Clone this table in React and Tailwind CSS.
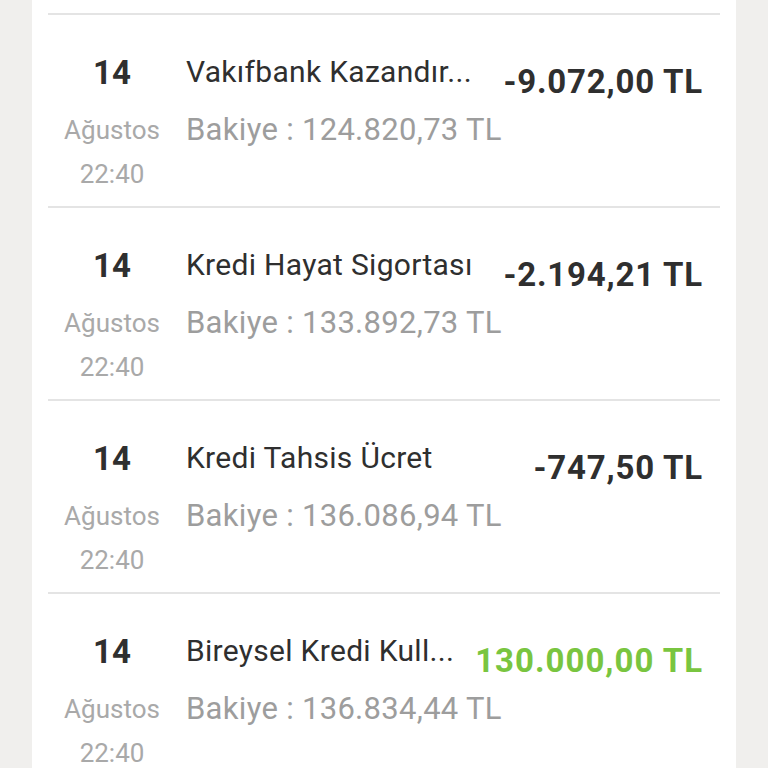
const rows = [
  { title: "Vakıfbank Kazandır...", balance: "124.820,73 TL", amount: "-9.072,00 TL", positive: false },
  { title: "Kredi Hayat Sigortası", balance: "133.892,73 TL", amount: "-2.194,21 TL", positive: false },
  { title: "Kredi Tahsis Ücret", balance: "136.086,94 TL", amount: "-747,50 TL", positive: false },
  { title: "Bireysel Kredi Kull...", balance: "136.834,44 TL", amount: "130.000,00 TL", positive: true },
];

const TransactionRow = ({ title, balance, amount, positive }) => {
  return (
    <div className="flex h-[193px] border-t-2 border-[#e4e4e4]">
      <div className="w-[128px] shrink-0 flex flex-col items-center pt-[41px]">
        <div className="text-[33px] leading-none font-bold text-[#2f2f2f]">14</div>
        <div className="mt-[28px] text-[26px] leading-none text-[#a9a9a9]">Ağustos</div>
        <div className="mt-[18px] text-[26px] leading-none text-[#a9a9a9]">22:40</div>
      </div>
      <div className="flex-1 min-w-0 pl-[10px] pt-[42px]">
        <div className="text-[30px] leading-none tracking-[0.3px] text-[#2f2f2f] whitespace-nowrap">{title}</div>
        <div className="mt-[27px] text-[31px] leading-none tracking-[0.3px] text-[#9d9d9d] whitespace-nowrap">
          Bakiye : {balance}
        </div>
      </div>
      <div className="shrink-0 pr-[17px] pt-[50px]">
        <div
          className={
            positive
              ? "text-[33px] leading-none tracking-[1px] font-bold text-[#79c540] whitespace-nowrap"
              : "text-[33px] leading-none tracking-[0.8px] font-bold text-[#2f2f2f] whitespace-nowrap"
          }
        >
          {amount}
        </div>
      </div>
    </div>
  );
};

export default function App() {
  return (
    <div className="h-[768px] overflow-hidden bg-[#f0efed] px-8 font-['Roboto',sans-serif]">
      <div className="bg-white h-full px-4 pt-[13px]">
        {rows.map((r, i) => (
          <TransactionRow key={i} {...r} />
        ))}
      </div>
    </div>
  );
}
